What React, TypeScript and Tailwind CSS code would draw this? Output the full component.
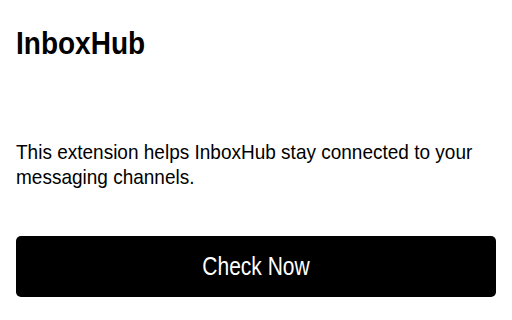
export default function App() {
  return (
    <div className="w-[512px] h-[320px] bg-white text-black flex flex-col px-4 pt-[27px] font-['Liberation_Sans',Arial,sans-serif]">
      <h1 className="text-[28px] leading-[34px] font-bold">
        <span className="inline-block scale-y-[1.1]">InboxHub</span>
      </h1>
      <p className="mt-[80px] text-[19px] leading-[24px] scale-y-[1.06]">
        This extension helps InboxHub stay connected to your messaging channels.
      </p>
      <button className="mt-[47px] h-[61px] w-full rounded-[5px] bg-black text-white text-[21px] flex items-center justify-center">
        <span className="inline-block scale-y-[1.2]">Check Now</span>
      </button>
    </div>
  );
}
